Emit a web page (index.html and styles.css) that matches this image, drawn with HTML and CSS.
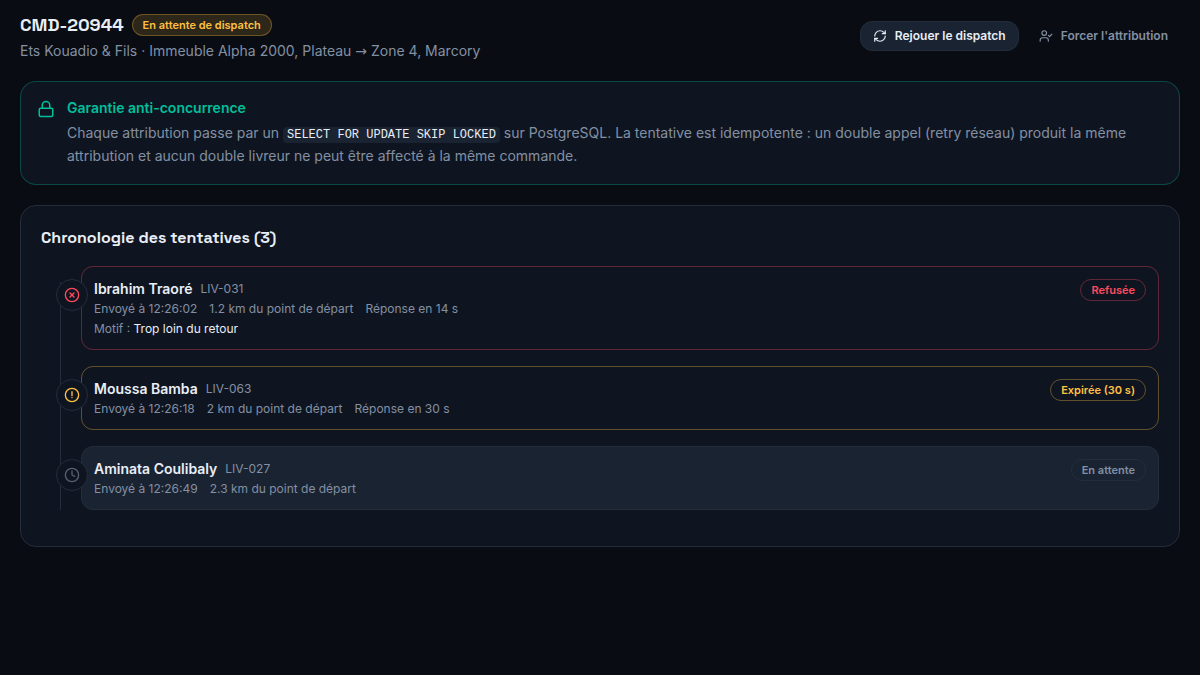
FILE: index.html
```
<!DOCTYPE html>
<html lang="fr">
<head>
    <meta charset="UTF-8">
    <meta name="viewport" content="width=device-width, initial-scale=1.0">
    <title>CMD-20944 - Dispatch</title>
    <link rel="stylesheet" href="styles.css">
</head>
<body>
    <main class="page">
        <header class="page-header">
            <div class="order">
                <div class="order-title">
                    <h1>CMD-20944</h1>
                    <span class="badge badge-pending">En attente de dispatch</span>
                </div>
                <p class="order-route">Ets Kouadio &amp; Fils · Immeuble Alpha 2000, Plateau <span class="arrow">→</span> Zone 4, Marcory</p>
            </div>
            <div class="actions">
                <button type="button" class="btn btn-secondary">
                    <svg class="icon-sm" viewBox="0 0 24 24"><path d="M3 12a9 9 0 0 1 9-9 9.75 9.75 0 0 1 6.74 2.74L21 8"/><path d="M21 3v5h-5"/><path d="M21 12a9 9 0 0 1-9 9 9.75 9.75 0 0 1-6.74-2.74L3 16"/><path d="M8 16H3v5"/></svg>
                    Rejouer le dispatch
                </button>
                <button type="button" class="btn btn-ghost">
                    <svg class="icon-sm" viewBox="0 0 24 24"><path d="m16 11 2 2 4-4"/><path d="M16 21v-2a4 4 0 0 0-4-4H6a4 4 0 0 0-4 4v2"/><circle cx="9" cy="7" r="4"/></svg>
                    Forcer l'attribution
                </button>
            </div>
        </header>

        <section class="card notice">
            <svg class="notice-icon" viewBox="0 0 24 24"><rect x="3" y="11" width="18" height="11" rx="2"/><path d="M7 11V7a5 5 0 0 1 10 0v4"/></svg>
            <div class="notice-body">
                <h2>Garantie anti-concurrence</h2>
                <p>Chaque attribution passe par un <code>SELECT FOR UPDATE SKIP LOCKED</code> sur PostgreSQL. La tentative est idempotente : un double appel (retry réseau) produit la même attribution et aucun double livreur ne peut être affecté à la même commande.</p>
            </div>
        </section>

        <section class="card history">
            <h2>Chronologie des tentatives (3)</h2>
            <ol class="timeline">
                <li class="attempt refused">
                    <span class="node"><svg class="icon" viewBox="0 0 24 24"><circle cx="12" cy="12" r="10"/><path d="m15 9-6 6"/><path d="m9 9 6 6"/></svg></span>
                    <article class="attempt-card">
                        <div class="attempt-info">
                            <h3>Ibrahim Traoré <span class="courier-id">LIV-031</span></h3>
                            <p class="meta"><span>Envoyé à 12:26:02</span><span>1.2 km du point de départ</span><span>Réponse en 14 s</span></p>
                            <p class="reason">Motif : <span>Trop loin du retour</span></p>
                        </div>
                        <span class="badge">Refusée</span>
                    </article>
                </li>
                <li class="attempt expired">
                    <span class="node"><svg class="icon" viewBox="0 0 24 24"><circle cx="12" cy="12" r="10"/><path d="M12 7v6"/><path d="M12 16h.01"/></svg></span>
                    <article class="attempt-card">
                        <div class="attempt-info">
                            <h3>Moussa Bamba <span class="courier-id">LIV-063</span></h3>
                            <p class="meta"><span>Envoyé à 12:26:18</span><span>2 km du point de départ</span><span>Réponse en 30 s</span></p>
                        </div>
                        <span class="badge">Expirée (30 s)</span>
                    </article>
                </li>
                <li class="attempt waiting">
                    <span class="node"><svg class="icon" viewBox="0 0 24 24"><circle cx="12" cy="12" r="10"/><path d="M12 6v6l4 2"/></svg></span>
                    <article class="attempt-card">
                        <div class="attempt-info">
                            <h3>Aminata Coulibaly <span class="courier-id">LIV-027</span></h3>
                            <p class="meta"><span>Envoyé à 12:26:49</span><span>2.3 km du point de départ</span></p>
                        </div>
                        <span class="badge">En attente</span>
                    </article>
                </li>
            </ol>
        </section>
    </main>
</body>
</html>
```
FILE: styles.css
```
:root {
    --bg: #090c13;
    --card: #0f1520;
    --raised: #1a2331;
    --border: #232d3b;
    --text: #e8eef6;
    --muted: #8390a3;
    --dim: #566070;
    --green: #00bf9a;
    --amber: #ffc043;
    --red: #ff4a5e;
}
* {
    box-sizing: border-box;
}
body {
    margin: 0;
    background-color: var(--bg);
    color: var(--text);
    font-family: Inter, 'Liberation Sans', sans-serif;
    font-size: 14px;
    line-height: 20px;
}
h1, h2, h3, p, ol {
    margin: 0;
    padding: 0;
}
svg {
    fill: none;
    stroke: currentColor;
    stroke-width: 2;
    stroke-linecap: round;
    stroke-linejoin: round;
    flex-shrink: 0;
}
.icon {
    width: 16px;
    height: 16px;
}
.icon-sm {
    width: 14px;
    height: 14px;
}

.page {
    display: flex;
    flex-direction: column;
    gap: 20px;
    padding: 11px 20px 20px;
}

/* Header */
.page-header {
    display: flex;
    align-items: center;
    justify-content: space-between;
    gap: 16px;
}
.order-title {
    display: flex;
    align-items: center;
    gap: 8px;
    margin-bottom: 2px;
}
.order-title h1 {
    font-family: 'Space Grotesk', Inter, sans-serif;
    font-size: 18px;
    line-height: 28px;
    font-weight: 700;
}
.order-route {
    color: var(--muted);
}
.arrow {
    font-family: 'DejaVu Sans', sans-serif;
    line-height: 16px;
}
.actions {
    display: flex;
    gap: 8px;
}
.btn {
    display: inline-flex;
    align-items: center;
    gap: 8px;
    height: 30px;
    padding: 0 12px;
    border: none;
    border-radius: 12px;
    background: none;
    font: 600 12px/16px Inter, sans-serif;
    cursor: pointer;
}
.btn-secondary {
    background-color: var(--raised);
    border: 1px solid var(--border);
    color: var(--text);
}
.btn-ghost {
    color: var(--muted);
}

.badge {
    flex-shrink: 0;
    height: 22px;
    padding: 2px 10px;
    border: 1px solid var(--border);
    border-radius: 11px;
    font-size: 11px;
    line-height: 16px;
    font-weight: 600;
}
.badge-pending {
    color: var(--amber);
    background-color: rgba(255, 192, 67, 0.15);
    border-color: rgba(255, 192, 67, 0.3);
}

/* Cards */
.card {
    background-color: var(--card);
    border: 1px solid var(--border);
    border-radius: 16px;
}
.notice {
    display: flex;
    align-items: flex-start;
    gap: 12px;
    padding: 16px 16px 17px;
    border-color: rgba(0, 191, 154, 0.3);
}
.notice-icon {
    width: 18px;
    height: 18px;
    margin-top: 2px;
    color: var(--green);
}
.notice h2 {
    margin-bottom: 3px;
    color: var(--green);
    font-size: 14px;
    font-weight: 600;
}
.notice p {
    color: var(--muted);
    line-height: 23px;
}
.notice code {
    padding: 1px 4px;
    border-radius: 4px;
    background-color: var(--raised);
    color: var(--text);
    font-family: 'Liberation Mono', monospace;
    font-size: 12px;
    line-height: 16px;
}
.history {
    padding: 20px;
}
.history h2 {
    margin-bottom: 16px;
    font-family: 'Space Grotesk', Inter, sans-serif;
    font-size: 16px;
    line-height: 24px;
    font-weight: 600;
}

/* Timeline */
.timeline {
    position: relative;
    list-style: none;
}
.timeline::before {
    content: "";
    position: absolute;
    top: 16px;
    bottom: 16px;
    left: 19px;
    width: 1px;
    background-color: var(--border);
}
.attempt {
    position: relative;
    padding: 0 0 16px 40px;
}
.node {
    position: absolute;
    top: 13px;
    left: 15px;
    display: flex;
    align-items: center;
    justify-content: center;
    width: 32px;
    height: 32px;
    border: 1px solid var(--border);
    border-radius: 50%;
    background-color: var(--card);
}
.attempt-card {
    display: flex;
    align-items: flex-start;
    justify-content: space-between;
    gap: 12px;
    padding: 12px;
    border: 1px solid var(--border);
    border-radius: 12px;
}
.attempt h3 {
    display: flex;
    align-items: center;
    gap: 8px;
    font-size: 14px;
    font-weight: 600;
}
.courier-id {
    color: var(--muted);
    font-size: 12px;
    line-height: 16px;
    font-weight: 400;
}
.meta {
    display: flex;
    flex-wrap: wrap;
    gap: 0 12px;
    margin-top: 2px;
    color: var(--muted);
    font-size: 12px;
    line-height: 16px;
}
.reason {
    margin-top: 4px;
    color: var(--muted);
    font-size: 12px;
    line-height: 16px;
}
.reason span {
    color: var(--text);
}
.refused .node,
.refused .badge {
    color: var(--red);
}
.refused .attempt-card,
.refused .badge {
    border-color: rgba(255, 74, 94, 0.35);
}
.expired .node,
.expired .badge {
    color: var(--amber);
}
.expired .attempt-card,
.expired .badge {
    border-color: rgba(255, 192, 67, 0.35);
}
.waiting .node {
    color: var(--dim);
}
.waiting .badge {
    color: var(--muted);
}
.waiting .attempt-card {
    background-color: var(--raised);
}
```
